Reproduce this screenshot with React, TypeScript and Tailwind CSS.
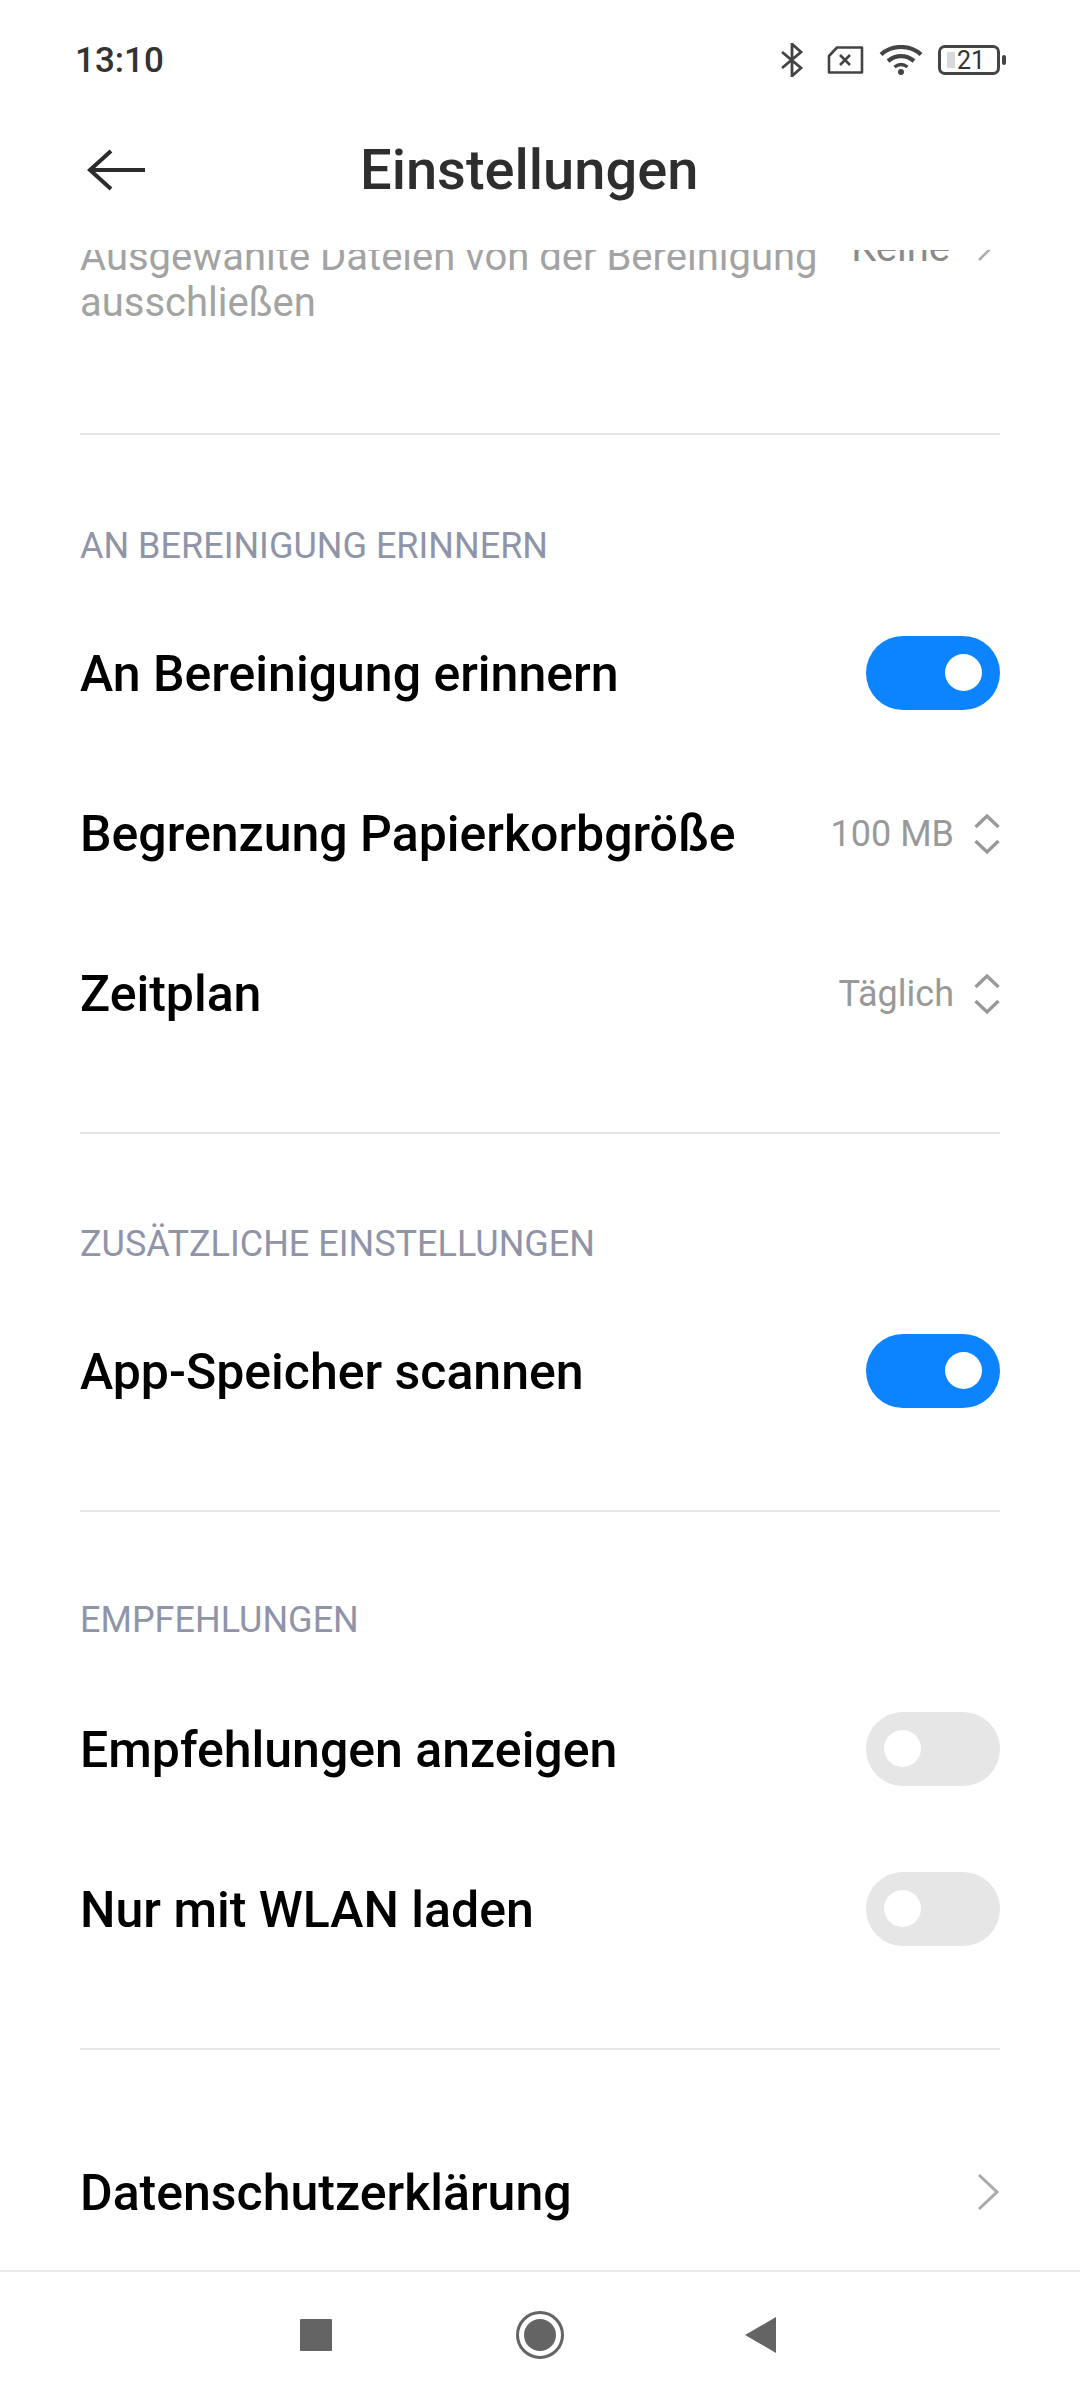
import React from 'react';

const font = { fontFamily: 'Roboto, "Noto Sans", sans-serif' };

function Toggle({ on }: { on: boolean }) {
  return (
    <div className={`-mt-[3px] flex h-[74px] w-[134px] shrink-0 items-center rounded-full ${on ? 'justify-end bg-[#0d84ff] pr-[18px]' : 'justify-start bg-[#e6e6e6] pl-[18px]'}`}>
      <div className="h-[37px] w-[37px] rounded-full bg-white" />
    </div>
  );
}

function UpDown() {
  return (
    <svg width="26" height="42" viewBox="0 0 26 42" fill="none" stroke="#999" strokeWidth="3.4" className="shrink-0">
      <path d="M1.5 14 13 3l11.5 11" />
      <path d="M1.5 28 13 39l11.5-11" />
    </svg>
  );
}

function Row({ title, children, height = 'h-[160px]' }: { title: string; children?: React.ReactNode; height?: string }) {
  return (
    <div className={`flex items-center justify-between ${height}`}>
      <span className="text-[50px] font-medium leading-none text-black">{title}</span>
      {children}
    </div>
  );
}

function Value({ text }: { text: string }) {
  return (
    <div className="flex items-center gap-[20px]">
      <span className="text-[36px] leading-none text-[#999]">{text}</span>
      <UpDown />
    </div>
  );
}

function SectionLabel({ text }: { text: string }) {
  return <div className="text-[36px] leading-[40px] text-[#9094a8]">{text}</div>;
}

function StatusBar() {
  return (
    <div className="flex h-[120px] items-center justify-between pl-[75px] pr-[74px]">
      <span className="text-[35px] font-medium leading-none text-[#333]">13:10</span>
      <div className="flex items-center">
        {/* bluetooth */}
        <svg width="22" height="34" viewBox="0 0 22 34" fill="none" stroke="#444" strokeWidth="2.8">
          <path d="M1 9l19 16-9 8V1l9 8L1 25" />
        </svg>
        {/* sim, no service */}
        <svg width="37" height="28" viewBox="0 0 37 28" fill="none" stroke="#444" strokeWidth="2.6" className="ml-[24px]">
          <path d="M10 1.5h25v25H2V10z" strokeLinejoin="round" />
          <path d="M13 9l10 10M23 9 13 19" />
        </svg>
        {/* wifi */}
        <svg width="44" height="30" viewBox="0 0 44 30" fill="none" stroke="#444" strokeWidth="4.2" className="ml-[15px]">
          <path d="M2 9.5C13-.5 31-.5 42 9.5" />
          <path d="M9 16c8-6.5 18-6.5 26 0" />
          <path d="M15.5 22c4-3 9-3 13 0" strokeWidth="3.4" />
          <circle cx="22" cy="27" r="3" fill="#444" stroke="none" />
        </svg>
        {/* battery */}
        <div className="ml-[15px] flex items-center">
          <div className="flex h-[30px] w-[62px] items-center rounded-[7px] border-[3px] border-[#444] pl-[6px]">
            <div className="h-[16px] w-[8px] bg-[#d9d9d9]" />
            <span className="ml-[2px] text-[25px] leading-none text-[#333]">21</span>
          </div>
          <div className="ml-[2px] h-[10px] w-[4px] rounded-sm bg-[#444]" />
        </div>
      </div>
    </div>
  );
}

export default function App() {
  return (
    <div className="flex h-[2400px] w-[1080px] flex-col overflow-hidden bg-white" style={font}>
      <StatusBar />

      {/* Title bar */}
      <div className="flex h-[130px] items-center pb-[30px] pl-[87px]">
        <svg width="59" height="42" viewBox="0 0 59 42" fill="none" stroke="#2b2b2b" strokeWidth="4">
          <path d="M58 21H3" />
          <path d="M24 2 3 21l21 19" />
        </svg>
        <span className="ml-[214px] text-[56px] font-medium leading-none text-[#2e2e2e]">Einstellungen</span>
      </div>

      {/* Scroll area */}
      <div className="min-h-0 flex-1 overflow-hidden px-[80px]">
        <div className="flex h-[185px] items-start justify-between border-b-2 border-[#e6e6e6]">
          <div className="-mt-[16px] w-[760px] text-[40px] leading-[46px] text-[#a3a3a3]">
            Ausgewählte Dateien von der Bereinigung ausschließen
          </div>
          <div className="-mt-[22px] mr-[7px] flex items-center gap-[27px]">
            <span className="text-[40px] leading-[40px] text-[#8a8a8a]">Keine</span>
            <svg width="16" height="28" viewBox="0 0 16 28" fill="none" stroke="#aaa" strokeWidth="2.5">
              <path d="M2 2l12 12L2 26" />
            </svg>
          </div>
        </div>

        <div className="pt-[91px]">
          <SectionLabel text="AN BEREINIGUNG ERINNERN" />
        </div>
        <div className="pt-[28px]">
          <Row title="An Bereinigung erinnern">
            <Toggle on />
          </Row>
          <Row title="Begrenzung Papierkorbgröße">
            <Value text="100 MB" />
          </Row>
          <Row title="Zeitplan">
            <Value text="Täglich" />
          </Row>
        </div>

        <div className="mt-[58px] border-t-2 border-[#e6e6e6] pt-[90px]">
          <SectionLabel text="ZUSÄTZLICHE EINSTELLUNGEN" />
        </div>
        <div className="pt-[28px]">
          <Row title="App-Speicher scannen">
            <Toggle on />
          </Row>
        </div>

        <div className="mt-[58px] border-t-2 border-[#e6e6e6] pt-[88px]">
          <SectionLabel text="EMPFEHLUNGEN" />
        </div>
        <div className="pt-[30px]">
          <Row title="Empfehlungen anzeigen">
            <Toggle on={false} />
          </Row>
          <Row title="Nur mit WLAN laden">
            <Toggle on={false} />
          </Row>
        </div>

        <div className="mt-[58px] border-t-2 border-[#e6e6e6] pt-[63px]">
          <Row title="Datenschutzerklärung">
            <svg width="24" height="38" viewBox="0 0 24 38" fill="none" stroke="#aaaaaa" strokeWidth="3" className="-mt-[2px]">
              <path d="M3 2l18 17L3 36" />
            </svg>
          </Row>
        </div>
      </div>

      {/* Nav bar */}
      <div className="flex h-[130px] shrink-0 items-center border-t-2 border-[#e8e8e8] bg-white pb-[2px] pl-[300px]">
        <div className="h-[32px] w-[32px] rounded-[1px] bg-[#646464]" />
        <svg width="48" height="48" viewBox="0 0 48 48" className="ml-[184px]">
          <circle cx="24" cy="24" r="22.5" fill="none" stroke="#646464" strokeWidth="3" />
          <circle cx="24" cy="24" r="16" fill="#646464" />
        </svg>
        <svg width="31" height="36" viewBox="0 0 31 36" className="ml-[181px]">
          <path d="M0 18 31 0v36z" fill="#646464" />
        </svg>
      </div>
    </div>
  );
}
